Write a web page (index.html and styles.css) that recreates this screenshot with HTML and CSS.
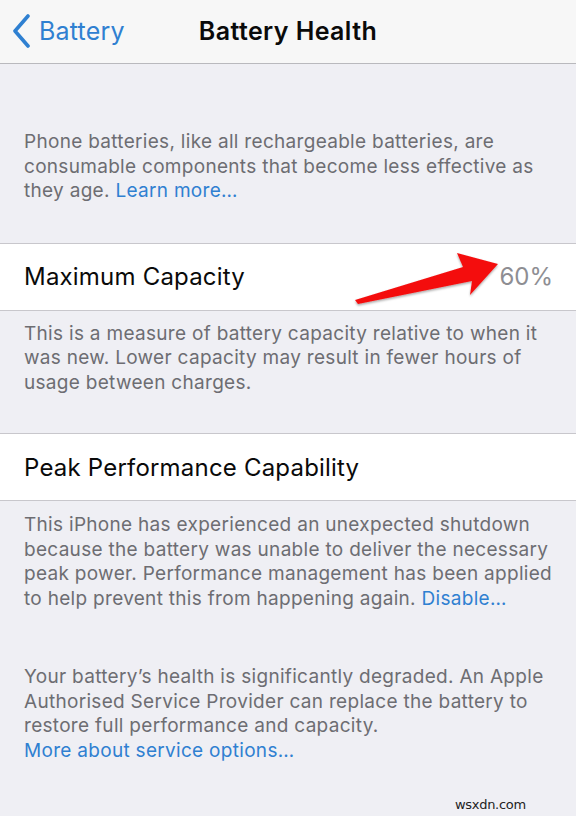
FILE: index.html
```html
<!DOCTYPE html>
<html>
<head>
<meta charset="utf-8">
<link rel="stylesheet" href="styles.css">
</head>
<body>
<div class="page">
  <header class="nav">
    <a class="back">
      <svg class="chev" width="20" height="34" viewBox="0 0 20 34"><path d="M16 2 L3 17 L16 32" fill="none" stroke="#2f80d1" stroke-width="3.6" stroke-linecap="round" stroke-linejoin="round"/></svg>
      <span>Battery</span>
    </a>
    <h1 class="title">Battery Health</h1>
    <span></span>
  </header>

  <p class="note intro">Phone batteries, like all rechargeable batteries, are<br>consumable components that become less effective as<br>they age. <span class="link">Learn more…</span></p>

  <div class="row">
    <span class="label">Maximum Capacity</span>
    <span class="value">60%</span>
  </div>

  <p class="note after">This is a measure of battery capacity relative to when it<br>was new. Lower capacity may result in fewer hours of<br>usage between charges.</p>

  <div class="row">
    <span class="label">Peak Performance Capability</span>
  </div>

  <p class="note after2">This iPhone has experienced an unexpected shutdown<br>because the battery was unable to deliver the necessary<br>peak power. Performance management has been applied<br>to help prevent this from happening again. <span class="link">Disable…</span></p>

  <p class="note health">Your battery’s health is significantly degraded. An Apple<br>Authorised Service Provider can replace the battery to<br>restore full performance and capacity.<br><span class="link">More about service options…</span></p>

  <div class="watermark">wsxdn.com</div>

  <svg class="arrow" width="576" height="816" viewBox="0 0 576 816">
    <defs>
      <filter id="sh" x="-10%" y="-30%" width="120%" height="160%">
        <feDropShadow dx="0" dy="1.5" stdDeviation="1.2" flood-color="#000" flood-opacity="0.35"/>
      </filter>
    </defs>
    <polygon points="355,300 463,267 457,253 498,264 470,295 472,281 358,304" fill="#f41010" filter="url(#sh)"/>
  </svg>
</div>
</body>
</html>
```
FILE: styles.css
```css
html, body {
  margin: 0;
  padding: 0;
}
body {
  background: #efeff4;
  font-family: Inter, "Noto Sans", sans-serif;
}
.page {
  position: relative;
  width: 576px;
  height: 816px;
  overflow: hidden;
  background: #efeff4;
}
.nav {
  height: 63px;
  border-bottom: 1px solid #b9b9bd;
  background: #f7f7f7;
  display: grid;
  grid-template-columns: 1fr auto 1fr;
  align-items: center;
}
.back {
  display: flex;
  align-items: center;
  gap: 7px;
  padding-left: 12px;
  padding-bottom: 2px;
  color: #2f80d1;
  font-size: 25px;
  letter-spacing: 0.2px;
}
.chev {
  display: block;
}
.title {
  margin: 0;
  padding-bottom: 2px;
  font-size: 25px;
  font-weight: 600;
  color: #0a0a0a;
  letter-spacing: 0.4px;
}
.note {
  margin: 0;
  padding: 0 24px;
  font-size: 19px;
  line-height: 24.5px;
  color: #6d6d72;
  letter-spacing: 0.3px;
}
.link {
  color: #2f80d1;
}
.intro {
  padding-top: 66px;
  padding-bottom: 39px;
}
.after {
  padding-top: 11px;
  padding-bottom: 38px;
}
.after2 {
  padding-top: 12px;
}
.health {
  padding-top: 54px;
}
.row {
  height: 66px;
  background: #fff;
  border-top: 1px solid #c8c7cc;
  border-bottom: 1px solid #c8c7cc;
  display: flex;
  align-items: center;
  justify-content: space-between;
  padding: 0 23px 0 24px;
}
.label {
  font-size: 24px;
  color: #0a0a0a;
  letter-spacing: 0.2px;
}
.value {
  font-size: 24px;
  color: #8e8e93;
}
.watermark {
  position: absolute;
  left: 455px;
  top: 797px;
  font-size: 13px;
  color: #222;
  font-family: "DejaVu Sans", sans-serif;
  letter-spacing: -0.3px;
}
.arrow {
  position: absolute;
  left: 0;
  top: 0;
  pointer-events: none;
}
```
